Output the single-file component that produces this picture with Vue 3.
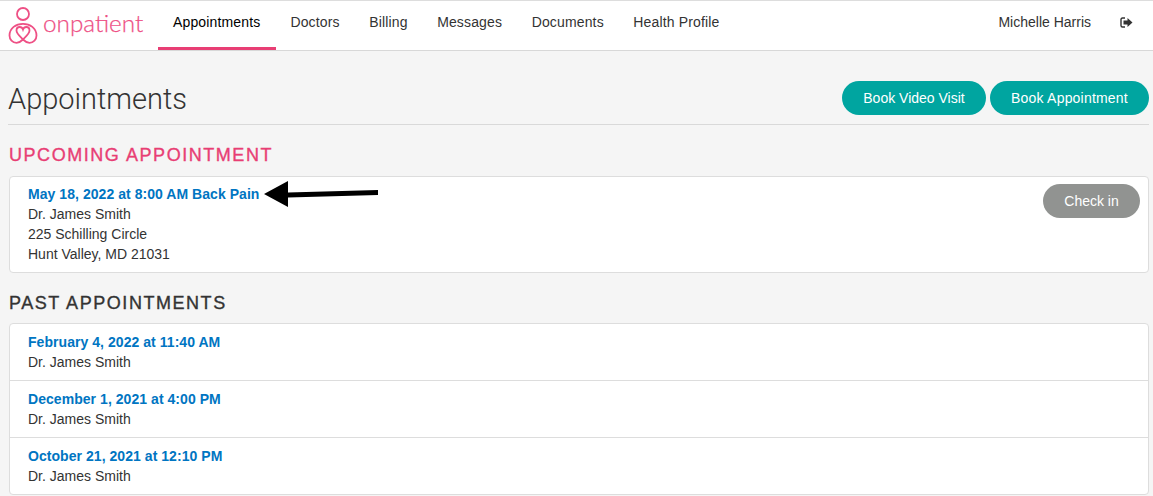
<template>
  <div class="page">
    <header class="topbar">
      <div class="logo">
        <svg width="32" height="42" viewBox="0 0 32 42" fill="none" stroke="#ee5085" stroke-width="1.8">
          <circle cx="15" cy="9" r="6" />
          <path d="M15 34.500C12.500 37 10.500 37.800 8.500 37.800 4.500 37.800 1.500 34.500 1.500 30.500 1.500 23 8 18.800 15 18.800s13.500 4.200 13.500 11.700c0 4-3 7.300-7 7.300-2 0-4-.8-6.500-3.300z" />
          <path d="M15 34.500C11.500 31 8.500 28.500 8.500 25.500 8.500 23.300 10 22 11.700 22 13.200 22 14.500 23 15 24.500 15.500 23 16.800 22 18.300 22 20 22 21.500 23.300 21.500 25.500 21.500 28.500 18.500 31 15 34.500z" />
        </svg>
        <span class="logo-text">onpatient</span>
      </div>
      <nav class="nav">
        <a v-for="item in navItems" :key="item" class="nav-item" :class="{ active: item === 'Appointments' }">{{ item }}</a>
      </nav>
      <div class="user">
        <span class="user-name">Michelle Harris</span>
        <svg class="logout" width="13" height="11" viewBox="0 0 13 11">
          <path d="M5 1H2.500C1.500 1 1 1.600 1 2.500v6C1 9.400 1.500 10 2.500 10H5" fill="none" stroke="#333" stroke-width="1.400" />
          <path d="M3.500 3.600h4V1l5 4.500-5 4.500V7.400h-4z" fill="#333" />
        </svg>
      </div>
    </header>

    <main class="content">
      <div class="title-row">
        <h1 class="title">Appointments</h1>
        <div class="actions">
          <button class="btn btn-teal video">Book Video Visit</button>
          <button class="btn btn-teal book">Book Appointment</button>
        </div>
      </div>

      <h2 class="section upcoming">UPCOMING APPOINTMENT</h2>
      <section class="card upcoming-card">
        <div class="row">
          <div>
            <a class="appt-link">{{ upcoming.date }}</a>
            <div class="line">{{ upcoming.doctor }}</div>
            <div class="line">225 Schilling Circle</div>
            <div class="line">Hunt Valley, MD 21031</div>
          </div>
          <button class="btn btn-grey">Check in</button>
        </div>
        <svg class="arrow" width="116" height="28" viewBox="0 0 116 28">
          <path d="M1 14 25 1V12.500L115 10V15L25 17.500V27z" fill="#000" />
        </svg>
      </section>

      <h2 class="section past">PAST APPOINTMENTS</h2>
      <section class="card past-card">
        <div v-for="appt in past" :key="appt" class="past-row">
          <a class="appt-link">{{ appt }}</a>
          <div class="line">Dr. James Smith</div>
        </div>
      </section>
    </main>
  </div>
</template>

<script setup>
const navItems = ['Appointments', 'Doctors', 'Billing', 'Messages', 'Documents', 'Health Profile']

const upcoming = {
  date: 'May 18, 2022 at 8:00 AM Back Pain',
  doctor: 'Dr. James Smith'
}

const past = [
  'February 4, 2022 at 11:40 AM',
  'December 1, 2021 at 4:00 PM',
  'October 21, 2021 at 12:10 PM'
]
</script>

<style>
html,
body {
  margin: 0;
  background: #f5f5f5;
}
</style>

<style scoped>
.page {
  font-family: "Liberation Sans", Arial, sans-serif;
  font-size: 14px;
  line-height: 20px;
  color: #333;
  height: 496px;
  overflow: hidden;
}

.topbar {
  display: flex;
  align-items: stretch;
  height: 49px;
  background: #fff;
  border-top: 1px solid #ddd;
  border-bottom: 1px solid #d8d8d8;
}

.logo {
  display: flex;
  align-items: center;
  width: 158px;
  padding-left: 8px;
  box-sizing: border-box;
  gap: 3px;
}

.logo-text {
  font-family: Lato, sans-serif;
  font-weight: 300;
  font-size: 24.3px;
  -webkit-text-stroke: 0.25px #ee5085;
  color: #ee5085;
  position: relative;
  top: -3px;
}

.nav {
  display: flex;
  flex: 1;
}

.nav-item {
  padding: 0 14.75px;
  line-height: 43px;
  letter-spacing: 0.15px;
  color: #333;
  border-bottom: 3px solid transparent;
}

.nav-item.active {
  padding: 0 15.25px 0 15px;
  color: #000;
  border-bottom-color: #e83e74;
}

.user {
  display: flex;
  align-items: flex-start;
  padding: 16px 20px 0 0;
}

.user-name {
  margin-right: 29px;
  line-height: 11px;
}

.content {
  padding: 0 4px 0 9px;
}

.title-row {
  display: flex;
  justify-content: space-between;
  align-items: flex-end;
  height: 74px;
  margin-left: -1px;
  padding-bottom: 9px;
  box-sizing: border-box;
  border-bottom: 1px solid #d9d9d9;
}

.title {
  margin: 0 0 -4px;
  font-family: Roboto, sans-serif;
  font-weight: 300;
  font-size: 29px;
  line-height: 40px;
  color: #333;
}

.actions {
  display: flex;
  gap: 4px;
}

.btn {
  height: 34px;
  border: none;
  border-radius: 17px;
  font-family: inherit;
  font-size: 14px;
  color: #fff;
  padding: 0;
}

.btn-teal {
  background: #00a5a0;
}

.video {
  width: 144px;
}

.book {
  width: 159px;
  letter-spacing: 0.2px;
}

.btn-grey {
  width: 97px;
  background: #919391;
}

.section {
  margin: 0;
  font-size: 18px;
  line-height: 20px;
  font-weight: 400;
  letter-spacing: 1.55px;
  -webkit-text-stroke: 0.35px currentColor;
}

.upcoming {
  margin-top: 20px;
  color: #e83e74;
}

.past {
  margin-top: 20px;
  color: #333;
}

.card {
  position: relative;
  margin-top: 11px;
  background: #fff;
  border: 1px solid #ddd;
  border-radius: 4px;
  box-sizing: border-box;
}

.past-card {
  margin-top: 10px;
}

.upcoming-card {
  height: 97px;
}

.row {
  display: flex;
  justify-content: space-between;
  align-items: flex-start;
  padding: 7px 8px 0 18px;
}

.appt-link {
  display: block;
  color: #0075c2;
  font-weight: 700;
  letter-spacing: 0.05px;
}

.line {
  color: #333;
}

.arrow {
  position: absolute;
  left: 253px;
  top: 3px;
}

.past-row {
  height: 57px;
  padding: 8px 18px 0;
  box-sizing: border-box;
  border-bottom: 1px solid #ddd;
}

.past-row:last-child {
  height: 56px;
  border-bottom: none;
}
</style>
